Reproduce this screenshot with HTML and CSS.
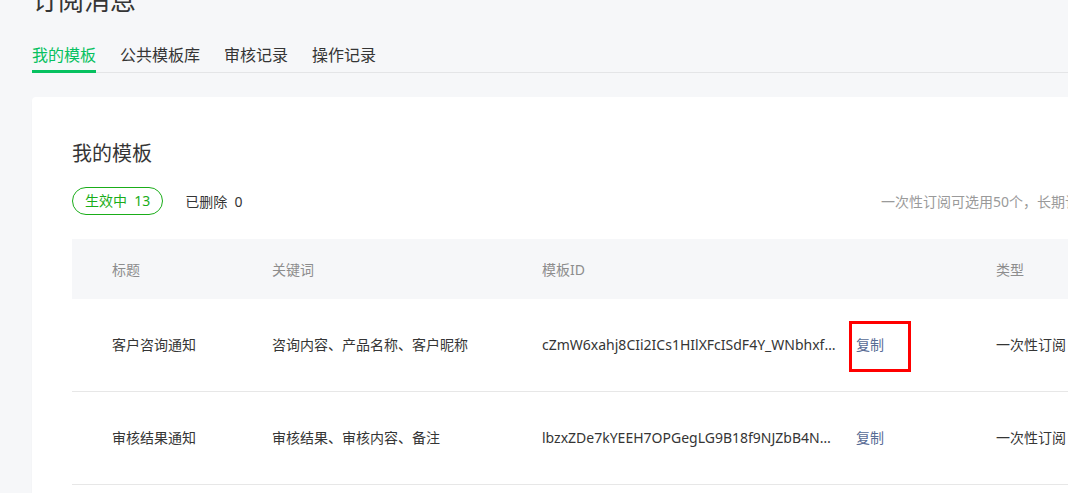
FILE: index.html
```html
<!DOCTYPE html>
<html lang="zh-CN">
<head>
  <meta charset="UTF-8">
  <title>订阅消息</title>
  <link rel="stylesheet" href="styles.css">
</head>
<body>
  <div class="page">
    <h1 class="page-title">订阅消息</h1>

    <div class="tabs">
      <div class="tab active">我的模板</div>
      <div class="tab">公共模板库</div>
      <div class="tab">审核记录</div>
      <div class="tab">操作记录</div>
    </div>

    <div class="card">
      <h2 class="card-title">我的模板</h2>

      <div class="filters">
        <span class="pill">生效中&nbsp;&nbsp;13</span>
        <span class="filter">已删除&nbsp;&nbsp;0</span>
        <span class="tip">一次性订阅可选用50个，长期订阅可选用50个</span>
      </div>

      <table class="tpl-table">
        <colgroup>
          <col class="c-title">
          <col class="c-kw">
          <col class="c-id">
          <col>
        </colgroup>
        <thead>
          <tr>
            <th>标题</th>
            <th>关键词</th>
            <th>模板ID</th>
            <th>类型</th>
          </tr>
        </thead>
        <tbody>
          <tr>
            <td>客户咨询通知</td>
            <td>咨询内容、产品名称、客户昵称</td>
            <td>
              <div class="id-cell">
                <span class="tpl-id">cZmW6xahj8CIi2ICs1HIlXFcISdF4Y_WNbhxfQ3kPz8</span>
                <a class="copy marked">复制</a>
              </div>
            </td>
            <td>一次性订阅</td>
          </tr>
          <tr>
            <td>审核结果通知</td>
            <td>审核结果、审核内容、备注</td>
            <td>
              <div class="id-cell">
                <span class="tpl-id">lbzxZDe7kYEEH7OPGegLG9B18f9NJZbB4NWmQs2T</span>
                <a class="copy">复制</a>
              </div>
            </td>
            <td>一次性订阅</td>
          </tr>
        </tbody>
      </table>
    </div>
  </div>
</body>
</html>
```

FILE: styles.css
```css
html, body {
  margin: 0;
  padding: 0;
  overflow: hidden;
}

body {
  font-family: "Noto Sans", "Noto Sans CJK SC", sans-serif;
  background: #f6f7f9;
  color: #353535;
}

.page {
  width: 1173px;
  padding-left: 32px;
}

.page-title {
  margin: -18px 0 0;
  font-size: 26px;
  line-height: 36px;
  font-weight: normal;
  color: #353535;
}

.tabs {
  display: flex;
  gap: 24px;
  margin-top: 25px;
  border-bottom: 1px solid #e4e5e7;
}

.tab {
  font-size: 16px;
  line-height: 24px;
  padding-bottom: 3px;
  border-bottom: 3px solid transparent;
  margin-bottom: -1px;
  color: #353535;
}

.tab.active {
  color: #07c160;
  border-bottom-color: #07c160;
}

.card {
  margin-top: 24px;
  background: #fff;
  border-radius: 4px;
  padding: 40px 40px 40px;
  box-shadow: 0 1px 2px rgba(0,0,0,0.03);
}

.card-title {
  margin: 0;
  font-size: 20px;
  line-height: 34px;
  font-weight: normal;
}

.filters {
  display: flex;
  align-items: center;
  margin-top: 16px;
  font-size: 14px;
}

.pill {
  height: 26px;
  line-height: 26px;
  padding: 0 12px;
  border: 1px solid #1aad19;
  border-radius: 14px;
  color: #1aad19;
}

.filter {
  margin-left: 22px;
}

.tip {
  margin-left: auto;
  color: #9a9a9a;
  white-space: nowrap;
}

.tpl-table {
  width: 100%;
  margin-top: 24px;
  border-collapse: collapse;
  table-layout: fixed;
  font-size: 14px;
}

.c-title { width: 160px; }
.c-kw { width: 270px; }
.c-id { width: 454px; }

.tpl-table th {
  height: 60px;
  padding: 0 0 0 40px;
  background: #f6f7f9;
  color: #8d8d8d;
  font-weight: normal;
  text-align: left;
}

.tpl-table td {
  height: 92px;
  padding: 0 0 0 40px;
  border-bottom: 1px solid #e7e7e7;
  white-space: nowrap;
  line-height: 20px;
}

.id-cell {
  display: flex;
  align-items: center;
}

.tpl-id {
  max-width: 300px;
  overflow: hidden;
  text-overflow: ellipsis;
  white-space: nowrap;
}

.copy {
  margin-left: 14px;
  color: #576b95;
  cursor: pointer;
  position: relative;
}

.copy.marked::after {
  content: "";
  position: absolute;
  left: -7px;
  top: -14px;
  width: 62px;
  height: 51px;
  box-sizing: border-box;
  border: 3px solid #f00;
}
```
